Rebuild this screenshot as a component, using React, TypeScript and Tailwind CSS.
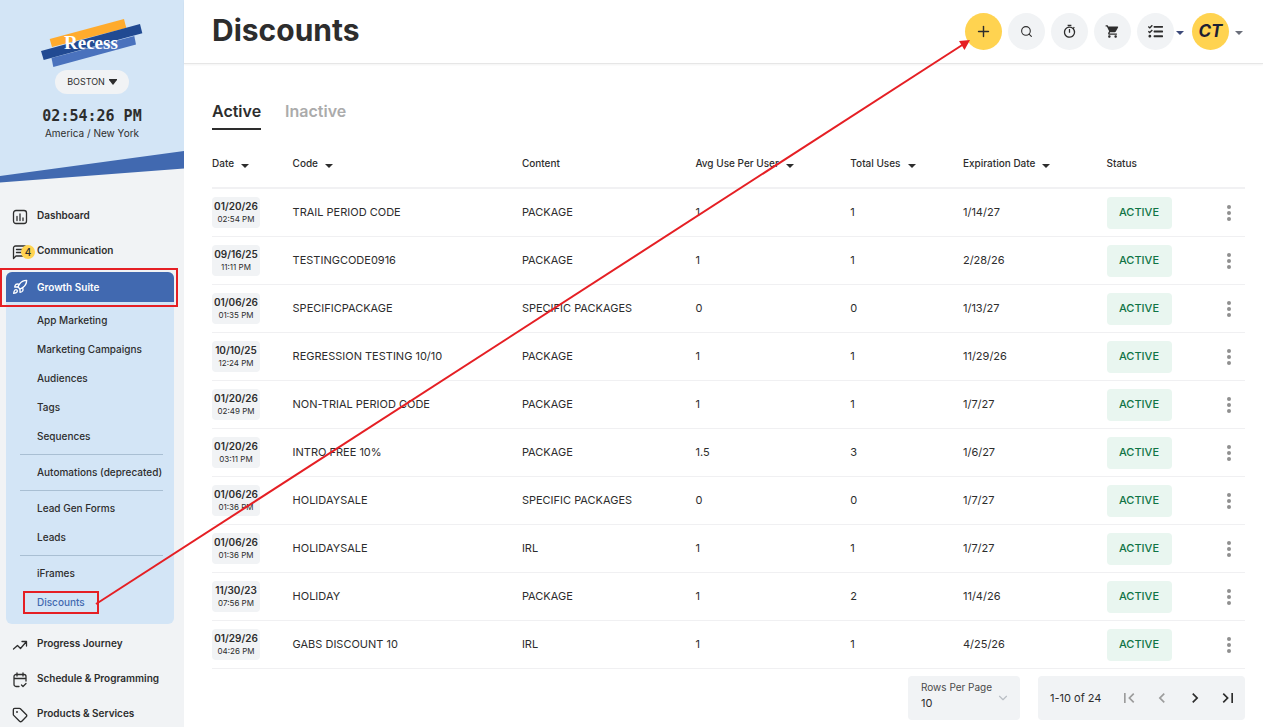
import React from 'react'
import { Rocket, Search, Plus, Tag, ChevronDown } from 'lucide-react'
import { MdOutlineTimer, MdShoppingCart, MdFirstPage, MdLastPage, MdChevronLeft, MdChevronRight } from 'react-icons/md'
import { FaTasks } from 'react-icons/fa'

const discounts = [
  { date: '01/20/26', time: '02:54 PM', code: 'TRAIL PERIOD CODE', content: 'PACKAGE', avg: '1', total: '1', expires: '1/14/27' },
  { date: '09/16/25', time: '11:11 PM', code: 'TESTINGCODE0916', content: 'PACKAGE', avg: '1', total: '1', expires: '2/28/26' },
  { date: '01/06/26', time: '01:35 PM', code: 'SPECIFICPACKAGE', content: 'SPECIFIC PACKAGES', avg: '0', total: '0', expires: '1/13/27' },
  { date: '10/10/25', time: '12:24 PM', code: 'REGRESSION TESTING 10/10', content: 'PACKAGE', avg: '1', total: '1', expires: '11/29/26' },
  { date: '01/20/26', time: '02:49 PM', code: 'NON-TRIAL PERIOD CODE', content: 'PACKAGE', avg: '1', total: '1', expires: '1/7/27' },
  { date: '01/20/26', time: '03:11 PM', code: 'INTRO FREE 10%', content: 'PACKAGE', avg: '1.5', total: '3', expires: '1/6/27' },
  { date: '01/06/26', time: '01:36 PM', code: 'HOLIDAYSALE', content: 'SPECIFIC PACKAGES', avg: '0', total: '0', expires: '1/7/27' },
  { date: '01/06/26', time: '01:36 PM', code: 'HOLIDAYSALE', content: 'IRL', avg: '1', total: '1', expires: '1/7/27' },
  { date: '11/30/23', time: '07:56 PM', code: 'HOLIDAY', content: 'PACKAGE', avg: '1', total: '2', expires: '11/4/26' },
  { date: '01/29/26', time: '04:26 PM', code: 'GABS DISCOUNT 10', content: 'IRL', avg: '1', total: '1', expires: '4/25/26' },
]

const columns = [
  { label: 'Date', width: 'w-[7.8%]', sort: true },
  { label: 'Code', width: 'w-[22.2%]', sort: true },
  { label: 'Content', width: 'w-[16.8%]', sort: false },
  { label: 'Avg Use Per User', width: 'w-[15%]', sort: true },
  { label: 'Total Uses', width: 'w-[10.9%]', sort: true },
  { label: 'Expiration Date', width: 'w-[13.9%]', sort: true },
  { label: 'Status', width: 'w-[9%]', sort: false },
]

const suiteGroups = [
  ['App Marketing', 'Marketing Campaigns', 'Audiences', 'Tags', 'Sequences'],
  ['Automations (deprecated)'],
  ['Lead Gen Forms', 'Leads'],
  ['iFrames', 'Discounts'],
]

export default function App() {
  return (
    <div className="relative flex h-screen overflow-hidden bg-white font-['Inter','Liberation_Sans',sans-serif] text-[#2d2d2d]">
      <Sidebar />
      <div className="flex min-w-0 flex-1 flex-col">
        <Header />
        <main className="flex-1 pt-9 pr-[18px] pl-7">
          <div className="flex gap-6 text-base leading-[22px] font-semibold">
            <button className="border-b-2 border-[#2d2d2d] pb-1.5">Active</button>
            <button className="border-b-2 border-transparent pb-1.5 text-[#ababab]">Inactive</button>
          </div>
          <DiscountTable />
          <Pagination />
        </main>
      </div>
      <Arrow />
    </div>
  )
}

function Sidebar() {
  return (
    <aside className="flex w-[184px] shrink-0 flex-col bg-[#f1f3f5]">
      <div className="flex flex-col items-center bg-[#d3e5f6] pt-[19px]">
        <Logo />
        <button className="mt-[3px] flex h-6 items-center gap-1 rounded-full bg-[#f1f3f5] px-3 text-[9px]">
          BOSTON
          <svg className="h-[6px] w-2" viewBox="0 0 8 6" fill="currentColor"><path d="M0 0h8v1L4 6 0 1z" /></svg>
        </button>
        <div className="mt-3 font-['DejaVu_Sans_Mono',monospace] text-[15px] leading-5 font-bold">02:54:26 PM</div>
        <div className="h-[25px] text-[10px] leading-[14px]">America / New York</div>
      </div>
      <svg className="h-8 w-full shrink-0" viewBox="0 0 184 32" preserveAspectRatio="none">
        <path d="M0 0h184v10L0 30z" fill="#d3e5f6" />
        <path d="M0 25L184 0v17.500L0 31.500z" fill="#4169b0" />
      </svg>
      <nav className="pt-[15px] text-[10px] font-semibold">
        <NavItem label="Dashboard" icon={<DashboardIcon />} />
        <NavItem label="Communication" icon={<MessageIcon />} badge="4" />
        <div className="mt-1 mr-2.5 ml-1.5 rounded-md bg-[#d3e5f6] pb-[7px]">
          <a href="#" className="relative flex h-[30px] items-center rounded-t-md bg-[#4169b0] text-white">
            <span className="flex w-[31px] pl-1.5"><Rocket size={16} strokeWidth={2} /></span>
            Growth Suite
            <span className="absolute -top-1 -right-1 -bottom-[5px] -left-1.5 border-2 border-[#e51f24]" />
          </a>
          <div className="pt-1">
            {suiteGroups.map((group, i) => (
              <div key={group[0]}>
                {i > 0 && <div className="my-[3px] mr-[11px] ml-[14px] h-px bg-[#a9bfd3]" />}
                {group.map((item) => (
                  <a key={item} href="#" className="flex h-[29px] items-center pl-[31px] font-medium">
                    {item === 'Discounts' ? (
                      <span className="relative text-[#4169b0]">
                        {item}
                        <span className="absolute -inset-x-3.5 -inset-y-1 border-2 border-[#e51f24]" />
                      </span>
                    ) : item}
                  </a>
                ))}
              </div>
            ))}
          </div>
        </div>
        <div className="pt-0.5">
          <NavItem label="Progress Journey" icon={<JourneyIcon />} />
          <NavItem label="Schedule & Programming" icon={<CalendarIcon />} />
          <NavItem label="Products & Services" icon={<Tag size={16} strokeWidth={2} />} />
        </div>
      </nav>
    </aside>
  )
}

function NavItem({ label, icon, badge }: { label: string; icon: React.ReactNode; badge?: string }) {
  return (
    <a href="#" className="relative flex h-[35px] items-center">
      <span className="flex w-[37px] shrink-0 pt-0.5 pl-3">{icon}</span>
      {label}
      {badge && (
        <span className="absolute top-3 left-[21px] flex size-[14px] items-center justify-center rounded-full bg-[#ffd350] font-medium">
          {badge}
        </span>
      )}
    </a>
  )
}

function Header() {
  return (
    <header className="flex h-16 shrink-0 items-center border-b border-[#e6e6e6] pr-5 pl-7 shadow-[0_1px_2px_rgba(0,0,0,0.05)]">
      <h1 className="pb-1 text-[30px] leading-9 font-bold">Discounts</h1>
      <div className="ml-auto flex items-center gap-1.5">
        <RoundButton label="Add discount" yellow><Plus size={17} strokeWidth={2} /></RoundButton>
        <RoundButton label="Search"><Search size={13} strokeWidth={2} /></RoundButton>
        <RoundButton label="Timer"><MdOutlineTimer size={15} /></RoundButton>
        <RoundButton label="Cart"><MdShoppingCart size={15} /></RoundButton>
        <div className="flex items-center gap-0.5">
          <RoundButton label="Tasks"><FaTasks size={15} /></RoundButton>
          <Caret className="mt-0.5 text-[#3d4a7a]" />
        </div>
        <div className="flex items-center gap-1.5 pl-0.5">
          <RoundButton label="Account" yellow>
            <span className="text-[17px] font-bold italic text-[#1c2033]">CT</span>
          </RoundButton>
          <Caret className="mt-0.5 text-[#6b6f7a]" />
        </div>
      </div>
    </header>
  )
}

function RoundButton({ label, yellow, children }: { label: string; yellow?: boolean; children: React.ReactNode }) {
  return (
    <button
      aria-label={label}
      className={`flex size-[37px] items-center justify-center rounded-full ${yellow ? 'bg-[#ffd350]' : 'bg-[#f1f3f5]'}`}
    >
      {children}
    </button>
  )
}

function DiscountTable() {
  return (
    <table className="mt-2.5 w-full table-fixed border-separate border-spacing-0 text-left">
      <thead>
        <tr>
          {columns.map((col) => (
            <th key={col.label} className={`h-[49px] border-b-2 border-[#f1f1f3] p-0 text-[10px] font-medium ${col.width}`}>
              <span className="flex items-center gap-[7px] whitespace-nowrap">
                {col.label}
                {col.sort && <Caret className="mt-1" />}
              </span>
            </th>
          ))}
          <th className="border-b-2 border-[#f1f1f3] p-0" />
        </tr>
      </thead>
      <tbody>
        {discounts.map((row, i) => (
          <tr key={i} className="text-[11px] *:h-12 *:border-b *:border-[#f0f0f2] *:p-0">
            <td>
              <div className="flex h-[31px] w-12 flex-col items-center justify-center rounded bg-[#f1f3f5]">
                <span className="text-[10px] leading-[14px] font-semibold">{row.date}</span>
                <span className="text-[8px] leading-[13px]">{row.time}</span>
              </div>
            </td>
            <td>{row.code}</td>
            <td>{row.content}</td>
            <td>{row.avg}</td>
            <td>{row.total}</td>
            <td>{row.expires}</td>
            <td>
              <span className="flex h-8 w-[65px] items-center justify-center rounded bg-[#e9f6f0] font-medium text-[#0f7445]">ACTIVE</span>
            </td>
            <td>
              <button aria-label="More" className="ml-auto flex w-8 justify-center">
                <svg className="h-4 w-1" viewBox="0 0 4 16" fill="#8f8f8f">
                  <circle cx="2" cy="2" r="2" />
                  <circle cx="2" cy="8" r="2" />
                  <circle cx="2" cy="14" r="2" />
                </svg>
              </button>
            </td>
          </tr>
        ))}
      </tbody>
    </table>
  )
}

function Pagination() {
  return (
    <div className="mt-[7px] flex justify-end gap-[18px]">
      <div className="flex h-11 w-28 items-center rounded bg-[#f1f3f5] pr-2.5 pl-[13px]">
        <div className="flex min-w-0 flex-1 flex-col pb-1">
          <label htmlFor="rows" className="text-[10px] leading-[14px] whitespace-nowrap text-[#4a4a4a]">Rows Per Page</label>
          <select id="rows" className="w-10 appearance-none bg-transparent text-[11px] leading-[18px]">
            <option>10</option>
            <option>25</option>
            <option>50</option>
          </select>
        </div>
        <ChevronDown size={14} strokeWidth={2} className="shrink-0 text-[#b9bec4]" />
      </div>
      <div className="flex h-11 w-[207px] items-center justify-between rounded bg-[#f1f3f5] pr-[7px] pl-3 text-[11px]">
        <span className="mr-1">1-10 of 24</span>
        <button aria-label="First page" className="text-[#9c9c9c]"><MdFirstPage size={20} /></button>
        <button aria-label="Previous page" className="text-[#9c9c9c]"><MdChevronLeft size={20} /></button>
        <button aria-label="Next page"><MdChevronRight size={20} /></button>
        <button aria-label="Last page"><MdLastPage size={20} /></button>
      </div>
    </div>
  )
}

function Caret({ className = '' }: { className?: string }) {
  return (
    <svg className={`h-1 w-2 shrink-0 ${className}`} viewBox="0 0 8 4" fill="currentColor">
      <path d="M0 0h8L4 4z" />
    </svg>
  )
}

function Logo() {
  return (
    <svg className="h-12 w-[102px]" viewBox="41 19 102 48">
      <path d="M49.700 39L124 19l2.300 9L52 47z" fill="#ffab2d" />
      <path d="M51.500 58L134.300 36l1.700 8.500L53.300 67z" fill="#4a72bd" />
      <path d="M41 51l99-27 2.300 9.300L43.700 60z" fill="#214a92" />
      <text x="64" y="49" fontFamily="Liberation Serif, serif" fontSize="19" fontWeight="700" fill="#fff">Recess</text>
    </svg>
  )
}

function Arrow() {
  return (
    <svg className="pointer-events-none absolute top-0 left-0 h-[620px] w-[980px]" viewBox="0 0 980 620">
      <path d="M96 604L963 44.500" stroke="#e51f24" strokeWidth="2" />
      <path d="M970 40L959 41l5.500 9z" fill="#e51f24" />
    </svg>
  )
}

function LineIcon({ children }: { children: React.ReactNode }) {
  return (
    <svg width="16" height="16" viewBox="0 0 16 16" fill="none" stroke="currentColor" strokeWidth="1.300" strokeLinecap="round" strokeLinejoin="round">
      {children}
    </svg>
  )
}

function DashboardIcon() {
  return (
    <LineIcon>
      <rect x="1.500" y="1.500" width="13" height="13" rx="2.500" />
      <path d="M5 7.500v4M8 5v6.500M11 9v2.500" />
    </LineIcon>
  )
}

function MessageIcon() {
  return (
    <LineIcon>
      <path d="M1.500 14.500V4a2 2 0 0 1 2-2h9a2 2 0 0 1 2 2v6a2 2 0 0 1-2 2H4z" />
      <path d="M4.500 5.500h7M4.500 8.500h5" />
    </LineIcon>
  )
}

function JourneyIcon() {
  return (
    <LineIcon>
      <path d="M1.500 12L5.500 8.500l3 3L14.500 4.500M10 4.500h4.500v4.500" />
    </LineIcon>
  )
}

function CalendarIcon() {
  return (
    <LineIcon>
      <path d="M7 14.500H4a2 2 0 0 1-2-2V4.500a2 2 0 0 1 2-2h8a2 2 0 0 1 2 2V9M2 6.500h12M5 1v3M11 1v3M9.500 13l1.500 1.500 3-3" />
    </LineIcon>
  )
}
